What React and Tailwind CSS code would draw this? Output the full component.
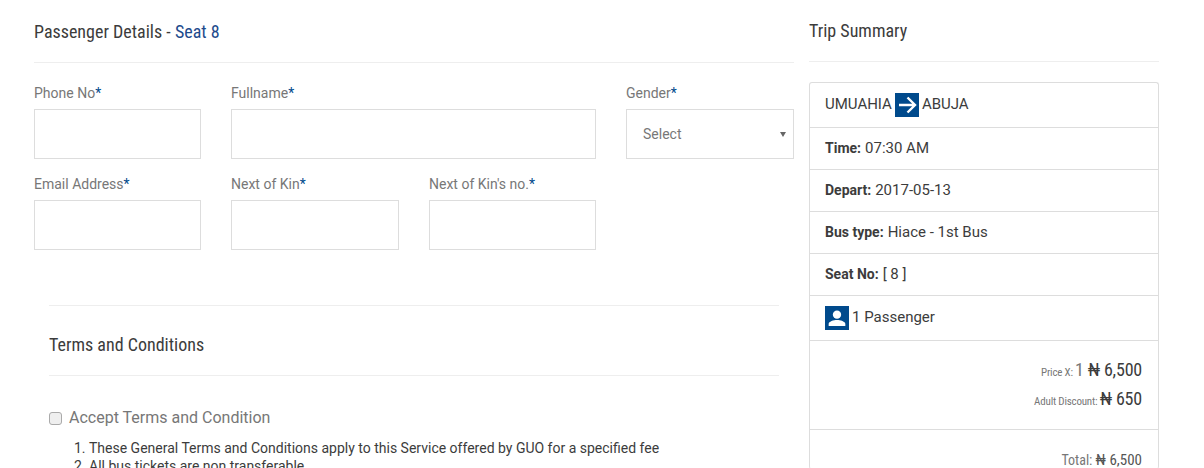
const ROBOTO = "font-['Roboto',sans-serif]";
const CONDENSED = "[font-stretch:75%]";

const Field = ({ label, className = "", children }) => (
  <div className={`flex flex-col ${className}`}>
    <label className="h-[25px] text-[14px] leading-[18px] text-[#777]">
      {label}
      <span className="text-[#004a8c]">*</span>
    </label>
    {children || <input className="h-[50px] w-full border border-[#ddd] bg-white" type="text" />}
  </div>
);

const Row = ({ children, className = "" }) => (
  <div className={`border-b border-[#ddd] px-[15px] text-[15px] text-[#3c3c3c] ${className}`}>{children}</div>
);

const Detail = ({ label, value }) => (
  <Row className="flex h-[42px] items-center">
    <b className="mr-1 text-[14px] font-bold">{label}</b>
    {value}
  </Row>
);

export default function App() {
  return (
    <div className={`h-[468px] overflow-hidden bg-white ${ROBOTO}`}>
      <div className="flex gap-[15px] pl-[34px]">
        <div className="w-[760px]">
          <h3 className={`flex h-[63px] items-center border-b border-[#eee] pt-[1px] text-[18px] text-[#3c3c3c] ${CONDENSED}`}>
            Passenger Details -&nbsp;<span className="text-[#1d4a8c]">Seat 8</span>
          </h3>

          <div className="mt-[21px] flex gap-[30px]">
            <Field label="Phone No" className="w-[167px]" />
            <Field label="Fullname" className="w-[365px]" />
            <Field label="Gender" className="w-[168px]">
              <div className="flex h-[50px] items-center justify-between border border-[#ddd] pl-[16px] pr-[7px] text-[14px] text-[#777]">
                Select
                <span className="h-0 w-0 border-x-[3px] border-t-[5px] border-x-transparent border-t-[#666]" />
              </div>
            </Field>
          </div>

          <div className="mt-[16px] flex gap-[30px]">
            <Field label="Email Address" className="w-[167px]" />
            <Field label="Next of Kin" className="w-[168px]" />
            <Field label="Next of Kin's no." className="w-[167px]" />
          </div>

          <div className="mx-[15px] mt-[55px] border-t border-[#eee]">
            <h3 className={`flex h-[70px] items-center border-b border-[#eee] pt-[8px] text-[18px] text-[#3c3c3c] ${CONDENSED}`}>
              Terms and Conditions
            </h3>
            <label className="mt-[32px] flex items-center text-[16px] leading-[20px] text-[#777]">
              <input type="checkbox" className="mr-[7px] h-[13px] w-[13px] appearance-none rounded-[3px] border border-[#aaa] bg-[#efefef]" />
              Accept Terms and Condition
            </label>
            <ol className="ml-[25px] mt-[11px] list-decimal pl-[15px] text-[14px] leading-[18px] text-[#3c3c3c]">
              <li>These General Terms and Conditions apply to this Service offered by GUO for a specified fee</li>
              <li>All bus tickets are non transferable</li>
            </ol>
          </div>
        </div>

        <div className="w-[350px]">
          <h3 className={`flex h-[62px] items-center border-b border-[#eee] text-[18px] text-[#3c3c3c] ${CONDENSED}`}>
            Trip Summary
          </h3>

          <div className="mt-[20px] rounded-[3px] border border-b-0 border-[#ddd]">
            <Row className="flex h-[45px] items-center">
              <span className="mb-[2px]">UMUAHIA</span>
              <span className="mx-[3px] flex h-6 w-6 items-center justify-center bg-[#004a8c] text-white">
                <svg width="24" height="24" viewBox="0 0 24 24" fill="none" stroke="currentColor" strokeWidth="2.4">
                  <path d="M4 12H20M12.500 4.500L20 12L12.500 19.500" />
                </svg>
              </span>
              <span className="mb-[2px]">ABUJA</span>
            </Row>
            <Detail label="Time:" value="07:30 AM" />
            <Detail label="Depart:" value="2017-05-13" />
            <Detail label="Bus type:" value="Hiace - 1st Bus" />
            <Detail label="Seat No:" value="[ 8 ]" />
            <Row className="flex h-[45px] items-center">
              <span className="mr-[3px] flex h-6 w-6 items-center justify-center bg-[#004a8c] text-white">
                <svg width="20" height="20" viewBox="0 0 24 24" fill="currentColor">
                  <circle cx="12" cy="8" r="5" />
                  <path d="M12 14.500c-4 0-10 1.800-10 4.800v2.200h20v-2.200c0-3-6-4.800-10-4.800z" />
                </svg>
              </span>
              <span className="mb-[2px]">1 Passenger</span>
            </Row>
            <div className="flex h-[89px] flex-col items-end gap-[5px] border-b border-[#ddd] px-[16px] pt-[17px]">
              <p className={`h-[24px] text-[18px] leading-[24px] tracking-[-0.2px] text-[#3c3c3c] ${CONDENSED}`}>
                <span className="text-[11px] text-[#777]">Price X: </span>
                <span className="text-[#777]">1</span> ₦ 6,500
              </p>
              <p className={`h-[24px] text-[18px] leading-[24px] tracking-[-0.2px] text-[#3c3c3c] ${CONDENSED}`}>
                <span className="text-[11px] text-[#777]">Adult Discount: </span>₦ 650
              </p>
            </div>
            <div className="flex justify-end px-[16px] pt-[21px]">
              <p className={`text-[14px] leading-[18px] text-[#777] ${CONDENSED}`}>
                Total: <span className="text-[15px] text-[#555]">₦ 6,500</span>
              </p>
            </div>
          </div>
        </div>
      </div>
    </div>
  );
}
